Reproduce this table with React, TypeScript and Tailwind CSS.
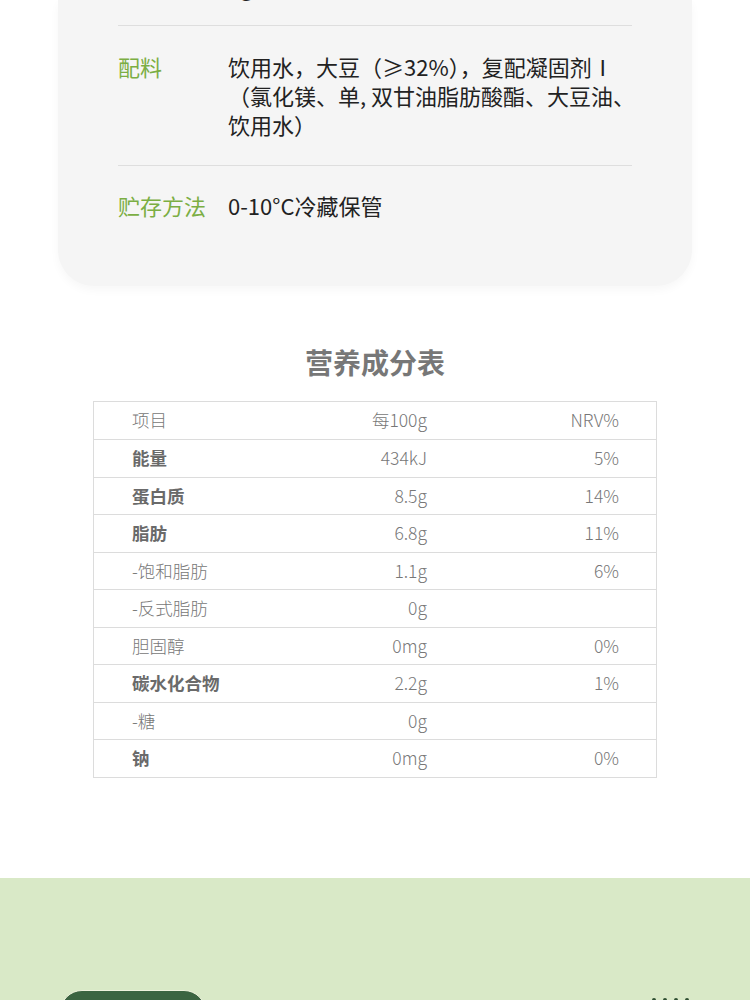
import React from "react";

const rows: { name: string; per: string; nrv: string; bold: boolean }[] = [
  { name: "能量", per: "434kJ", nrv: "5%", bold: true },
  { name: "蛋白质", per: "8.5g", nrv: "14%", bold: true },
  { name: "脂肪", per: "6.8g", nrv: "11%", bold: true },
  { name: "-饱和脂肪", per: "1.1g", nrv: "6%", bold: false },
  { name: "-反式脂肪", per: "0g", nrv: "", bold: false },
  { name: "胆固醇", per: "0mg", nrv: "0%", bold: false },
  { name: "碳水化合物", per: "2.2g", nrv: "1%", bold: true },
  { name: "-糖", per: "0g", nrv: "", bold: false },
  { name: "钠", per: "0mg", nrv: "0%", bold: true },
];

const font = { fontFamily: '"Noto Sans CJK SC", "Noto Sans", sans-serif' };

export default function App() {
  return (
    <div className="min-h-[1000px] bg-white overflow-hidden" style={font}>
      {/* info card */}
      <div className="mx-[58px] overflow-hidden rounded-b-[36px] bg-[#f5f5f5] px-[60px] pb-[39px] shadow-[0_4px_10px_rgba(0,0,0,0.035)]">
        <div className="-mt-[28px] flex pb-[24px] text-[22px] leading-[29px]">
          <div className="w-[110px] shrink-0" />
          <div className="text-[#222]">5g</div>
        </div>
        <div className="h-px bg-[#dedede]" />
        <div className="flex py-[26px] text-[22px] leading-[29px]">
          <div className="w-[110px] shrink-0 text-[#7bae43]">配料</div>
          <div className="text-[#222] whitespace-nowrap">
            <div>饮用水，大豆（≥32%），复配凝固剂Ⅰ</div>
            <div>（氯化镁、单, 双甘油脂肪酸酯、大豆油、</div>
            <div>饮用水）</div>
          </div>
        </div>
        <div className="h-px bg-[#dedede]" />
        <div className="flex pt-[25px] pb-[27px] text-[22px] leading-[29px]">
          <div className="w-[110px] shrink-0 text-[#7bae43]">贮存方法</div>
          <div className="text-[#222]">0-10°C冷藏保管</div>
        </div>
      </div>

      {/* nutrition table */}
      <div className="mt-[62px] text-center text-[28px] font-bold leading-[28px] text-[#777]">
        营养成分表
      </div>
      <div className="mx-auto mt-[25px] w-[564px] border border-[#dcdcdc] text-[17.5px] text-[#777]">
        <div className="grid h-[37px] grid-cols-[1fr_120px_192px] items-center pl-[38px] pr-[37px] font-light">
          <div>项目</div>
          <div className="text-right">每100g</div>
          <div className="text-right">NRV%</div>
        </div>
        {rows.map((r) => (
          <div
            key={r.name}
            className="grid h-[37.5px] grid-cols-[1fr_120px_192px] items-center border-t border-[#dcdcdc] pl-[38px] pr-[37px]"
          >
            <div className={r.bold ? "font-bold text-[#6a6a6a]" : "font-light"}>{r.name}</div>
            <div className="text-right font-light">{r.per}</div>
            <div className="text-right font-light">{r.nrv}</div>
          </div>
        ))}
      </div>

      {/* green section */}
      <div className="mt-[100px] bg-[#d9e9c7] px-[60px] pt-[112px] pb-10">
        <div className="flex items-start justify-between">
          <div className="h-[44px] w-[146px] rounded-[22px] border-[1.5px] border-[#eef2dc] bg-[#3b6441]" />
          <div className="mt-[8px] mr-[1px] flex gap-[7px]">
            <span className="h-[4px] w-[4px] rounded-full bg-[#2f4f31]" />
            <span className="h-[4px] w-[4px] rounded-full bg-[#2f4f31]" />
            <span className="h-[4px] w-[4px] rounded-full bg-[#2f4f31]" />
            <span className="h-[4px] w-[4px] rounded-full bg-[#2f4f31]" />
          </div>
        </div>
      </div>
    </div>
  );
}
